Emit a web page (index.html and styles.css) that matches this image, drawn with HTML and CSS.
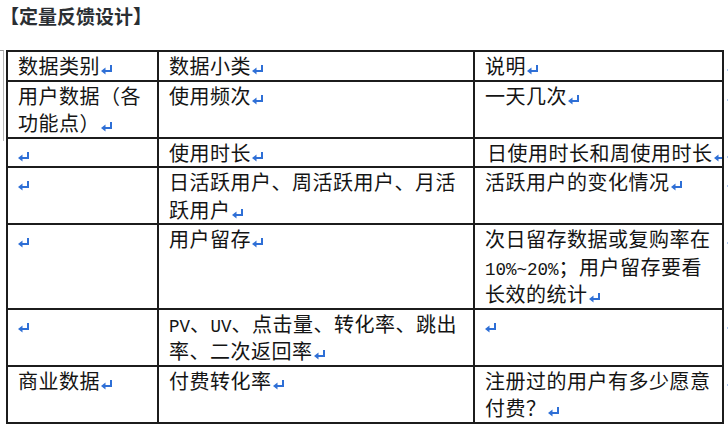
FILE: index.html
```html
<!DOCTYPE html>
<html lang="zh-CN">
<head>
<meta charset="utf-8">
<title>定量反馈设计</title>
<link rel="stylesheet" href="styles.css">
</head>
<body>
<h1 class="title">【定量反馈设计】</h1>
<div class="doc">
  <span class="corner"></span>
  <table class="grid">
    <colgroup><col class="c1"><col class="c2"><col class="c3"><col class="c4"></colgroup>
    <tr>
      <td>数据类别<svg class="rt" viewBox="0 0 12 11"><path d="M10 1V7H3"/><polygon points="0,7 4.5,3.5 4.5,10.5"/></svg></td>
      <td>数据小类<svg class="rt" viewBox="0 0 12 11"><path d="M10 1V7H3"/><polygon points="0,7 4.5,3.5 4.5,10.5"/></svg></td>
      <td>说明<svg class="rt" viewBox="0 0 12 11"><path d="M10 1V7H3"/><polygon points="0,7 4.5,3.5 4.5,10.5"/></svg></td>
      <td class="eor"><svg class="rt" viewBox="0 0 12 11"><path d="M10 1V7H3"/><polygon points="0,7 4.5,3.5 4.5,10.5"/></svg></td>
    </tr>
    <tr>
      <td>用户数据（各功能点）<svg class="rt" viewBox="0 0 12 11"><path d="M10 1V7H3"/><polygon points="0,7 4.5,3.5 4.5,10.5"/></svg></td>
      <td>使用频次<svg class="rt" viewBox="0 0 12 11"><path d="M10 1V7H3"/><polygon points="0,7 4.5,3.5 4.5,10.5"/></svg></td>
      <td>一天几次<svg class="rt" viewBox="0 0 12 11"><path d="M10 1V7H3"/><polygon points="0,7 4.5,3.5 4.5,10.5"/></svg></td>
      <td class="eor"><svg class="rt" viewBox="0 0 12 11"><path d="M10 1V7H3"/><polygon points="0,7 4.5,3.5 4.5,10.5"/></svg></td>
    </tr>
    <tr>
      <td><svg class="rt first" viewBox="0 0 12 11"><path d="M10 1V7H3"/><polygon points="0,7 4.5,3.5 4.5,10.5"/></svg></td>
      <td>使用时长<svg class="rt" viewBox="0 0 12 11"><path d="M10 1V7H3"/><polygon points="0,7 4.5,3.5 4.5,10.5"/></svg></td>
      <td class="nowrap">日使用时长和周使用时长<svg class="rt" viewBox="0 0 12 11"><path d="M10 1V7H3"/><polygon points="0,7 4.5,3.5 4.5,10.5"/></svg></td>
      <td class="eor"><svg class="rt" viewBox="0 0 12 11"><path d="M10 1V7H3"/><polygon points="0,7 4.5,3.5 4.5,10.5"/></svg></td>
    </tr>
    <tr>
      <td><svg class="rt first" viewBox="0 0 12 11"><path d="M10 1V7H3"/><polygon points="0,7 4.5,3.5 4.5,10.5"/></svg></td>
      <td>日活跃用户、周活跃用户、月活跃用户<svg class="rt" viewBox="0 0 12 11"><path d="M10 1V7H3"/><polygon points="0,7 4.5,3.5 4.5,10.5"/></svg></td>
      <td>活跃用户的变化情况<svg class="rt" viewBox="0 0 12 11"><path d="M10 1V7H3"/><polygon points="0,7 4.5,3.5 4.5,10.5"/></svg></td>
      <td class="eor"><svg class="rt" viewBox="0 0 12 11"><path d="M10 1V7H3"/><polygon points="0,7 4.5,3.5 4.5,10.5"/></svg></td>
    </tr>
    <tr>
      <td><svg class="rt first" viewBox="0 0 12 11"><path d="M10 1V7H3"/><polygon points="0,7 4.5,3.5 4.5,10.5"/></svg></td>
      <td>用户留存<svg class="rt" viewBox="0 0 12 11"><path d="M10 1V7H3"/><polygon points="0,7 4.5,3.5 4.5,10.5"/></svg></td>
      <td>次日留存数据或复购率在<span class="lat">10%~20%</span>；用户留存要看长效的统计<svg class="rt" viewBox="0 0 12 11"><path d="M10 1V7H3"/><polygon points="0,7 4.5,3.5 4.5,10.5"/></svg></td>
      <td class="eor"><svg class="rt" viewBox="0 0 12 11"><path d="M10 1V7H3"/><polygon points="0,7 4.5,3.5 4.5,10.5"/></svg></td>
    </tr>
    <tr>
      <td><svg class="rt first" viewBox="0 0 12 11"><path d="M10 1V7H3"/><polygon points="0,7 4.5,3.5 4.5,10.5"/></svg></td>
      <td><span class="lat">PV</span>、<span class="lat">UV</span>、点击量、转化率、跳出率、二次返回率<svg class="rt" viewBox="0 0 12 11"><path d="M10 1V7H3"/><polygon points="0,7 4.5,3.5 4.5,10.5"/></svg></td>
      <td><svg class="rt first" viewBox="0 0 12 11"><path d="M10 1V7H3"/><polygon points="0,7 4.5,3.5 4.5,10.5"/></svg></td>
      <td class="eor"><svg class="rt" viewBox="0 0 12 11"><path d="M10 1V7H3"/><polygon points="0,7 4.5,3.5 4.5,10.5"/></svg></td>
    </tr>
    <tr>
      <td>商业数据<svg class="rt" viewBox="0 0 12 11"><path d="M10 1V7H3"/><polygon points="0,7 4.5,3.5 4.5,10.5"/></svg></td>
      <td>付费转化率<svg class="rt" viewBox="0 0 12 11"><path d="M10 1V7H3"/><polygon points="0,7 4.5,3.5 4.5,10.5"/></svg></td>
      <td>注册过的用户有多少愿意付费？<svg class="rt" viewBox="0 0 12 11"><path d="M10 1V7H3"/><polygon points="0,7 4.5,3.5 4.5,10.5"/></svg></td>
      <td class="eor"><svg class="rt" viewBox="0 0 12 11"><path d="M10 1V7H3"/><polygon points="0,7 4.5,3.5 4.5,10.5"/></svg></td>
    </tr>
  </table>
</div>
</body>
</html>
```
FILE: styles.css
```css
html, body {
  margin: 0;
  padding: 0;
  background: #ffffff;
  overflow: hidden;
}

body {
  width: 728px;
  height: 429px;
  font-family: "Noto Sans CJK SC", "Noto Sans", sans-serif;
  color: #141414;
}

.title {
  margin: 0;
  padding: 4px 0 0 0;
  font-size: 19px;
  line-height: 24px;
  font-weight: 700;
  color: #2b2f33;
  letter-spacing: 0;
}

.doc {
  position: relative;
  margin-top: 22px;
  padding-left: 6px;
}

.corner {
  position: absolute;
  left: 0;
  top: 0;
  width: 3px;
  height: 90px;
  border-top: 1px solid #9a9a9a;
  border-right: 1px solid #b8b8b8;
}

.grid {
  border-collapse: collapse;
  table-layout: fixed;
  width: 726px;
  font-size: 20px;
  line-height: 27.5px;
  letter-spacing: 0.5px;
}

.c1 { width: 151px; }
.c2 { width: 316px; }
.c3 { width: 249px; }
.c4 { width: 10px; }

.grid td {
  border: 2px solid #1c1c1c;
  padding: 0 8px 0 10px;
  vertical-align: top;
  overflow: hidden;
}

.grid td.eor {
  border: none;
  padding: 0 0 0 2px;
}

.grid td.nowrap {
  white-space: nowrap;
  padding-left: 12px;
}

.lat {
  font-family: "Liberation Mono", monospace;
  font-size: 17.5px;
  line-height: 1;
  letter-spacing: 0;
}

.rt {
  display: inline-block;
  width: 12px;
  height: 11px;
  margin-left: 1px;
  vertical-align: -1px;
}

.rt.first {
  margin-left: 0;
}

.rt path {
  fill: none;
  stroke: #2e6fd6;
  stroke-width: 2;
}

.rt polygon {
  fill: #2e6fd6;
}
```
